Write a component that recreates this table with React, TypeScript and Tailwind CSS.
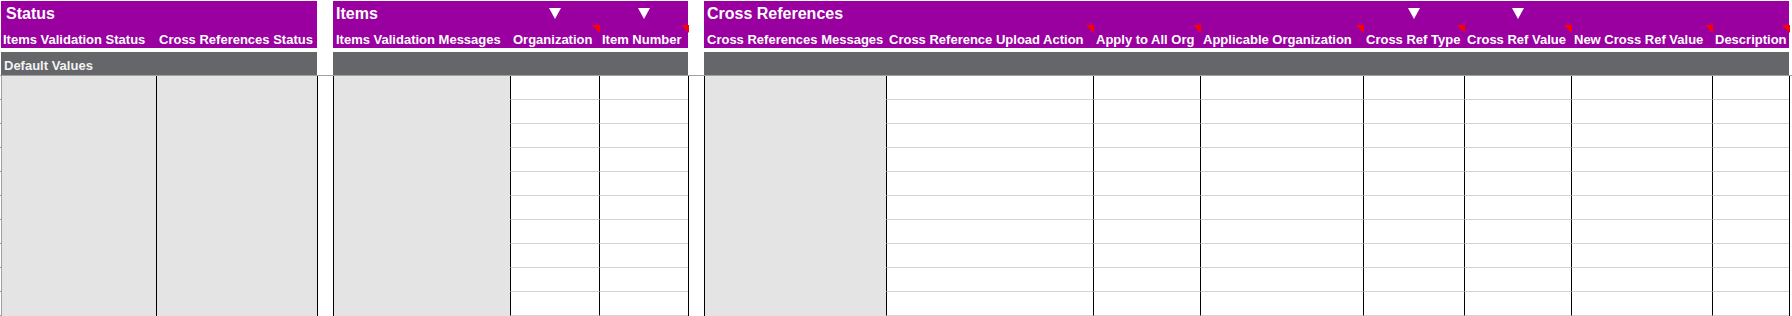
const GRID =
  "grid grid-cols-[1px_155px_161px_16px_177px_89px_89px_16px_182px_207px_107px_163px_101px_107px_141px_77px_1fr]";

type Column = {
  group?: "status" | "items" | "xref";
  title?: string;
  label?: string;
  shaded?: boolean;
  note?: boolean;
  picker?: boolean;
  first?: boolean;
};

const columns: Column[] = [
  { group: "status", title: "Status", label: "Items Validation Status", shaded: true, first: true },
  { group: "status", label: "Cross References Status", shaded: true },
  {},
  { group: "items", title: "Items", label: "Items Validation Messages", shaded: true },
  { group: "items", label: "Organization", note: true, picker: true },
  { group: "items", label: "Item Number", note: true, picker: true },
  {},
  { group: "xref", title: "Cross References", label: "Cross References Messages", shaded: true },
  { group: "xref", label: "Cross Reference Upload Action", note: true },
  { group: "xref", label: "Apply to All Org", note: true },
  { group: "xref", label: "Applicable Organization", note: true },
  { group: "xref", label: "Cross Ref Type", note: true, picker: true },
  { group: "xref", label: "Cross Ref Value", note: true, picker: true },
  { group: "xref", label: "New Cross Ref Value", note: true },
  { group: "xref", label: "Description", note: true },
];

const rows = Array.from({ length: 10 }, (_, i) => i);

const DownArrow = () => (
  <svg width="12" height="11" viewBox="0 0 12 11">
    <polygon points="0,0 12,0 6,11" fill="#ffffff" />
  </svg>
);

const NoteFlag = () => (
  <svg className="absolute top-0 right-[-1px] z-10" width="8" height="8" viewBox="0 0 8 8">
    <polygon points="0,0 8,0 8,8" fill="#ff0000" />
  </svg>
);

const TitleRow = () => (
  <div className={`${GRID} h-[24px]`}>
    <div />
    {columns.map((c, i) =>
      c.group ? (
        <div key={i} className="bg-[#99009f] text-white">
          {c.title && (
            <div
              className={`whitespace-nowrap pt-[5px] text-[16px] leading-none ${
                c.first ? "pl-[5px]" : "pl-[3px]"
              }`}
            >
              {c.title}
            </div>
          )}
          {c.picker && (
            <div className="flex justify-center pt-[7px]">
              <DownArrow />
            </div>
          )}
        </div>
      ) : (
        <div key={i} />
      )
    )}
    <div />
  </div>
);

const LabelRow = () => (
  <div className={`${GRID} h-[23px]`}>
    <div />
    {columns.map((c, i) =>
      c.group ? (
        <div key={i} className="relative bg-[#99009f] text-white">
          <div
            className={`whitespace-nowrap pt-[8px] text-[13px] leading-none ${
              c.first ? "pl-[2px]" : "pl-[3px]"
            }`}
          >
            {c.label}
          </div>
          {c.note && <NoteFlag />}
        </div>
      ) : (
        <div key={i} />
      )
    )}
    <div />
  </div>
);

const DefaultsRow = () => (
  <div className={`${GRID} h-[23px]`}>
    <div />
    {columns.map((c, i) =>
      c.group ? (
        <div key={i} className="bg-[#646669] text-[#f4f4f4]">
          {c.first && (
            <div className="whitespace-nowrap pt-[7px] pl-[3px] text-[13px] leading-none">
              Default Values
            </div>
          )}
        </div>
      ) : (
        <div key={i} />
      )
    )}
    <div />
  </div>
);

const BodyRow = () => (
  <div className={`${GRID} h-[24px]`}>
    <div className="border-b border-[#a0a0a0]" />
    {columns.map((c, i) => {
      if (c.first) return <div key={i} className="border-l border-[#a0a0a0] bg-[#e4e4e4]" />;
      if (!c.group) return <div key={i} className="border-l border-black" />;
      if (c.shaded) return <div key={i} className="border-l border-black bg-[#e4e4e4]" />;
      return <div key={i} className="border-l border-l-black border-b border-b-[#d4d4d4]" />;
    })}
    <div className="border-l border-black" />
  </div>
);

export default function App() {
  return (
    <div className="h-[316px] w-[1792px] overflow-hidden bg-white pt-px font-bold font-[family-name:'Liberation_Sans',Arial,sans-serif]">
      <TitleRow />
      <LabelRow />
      <div className="h-[4px]" />
      <DefaultsRow />
      <div className="h-px bg-[#a0a0a0]" />
      {rows.map((r) => (
        <BodyRow key={r} />
      ))}
    </div>
  );
}
